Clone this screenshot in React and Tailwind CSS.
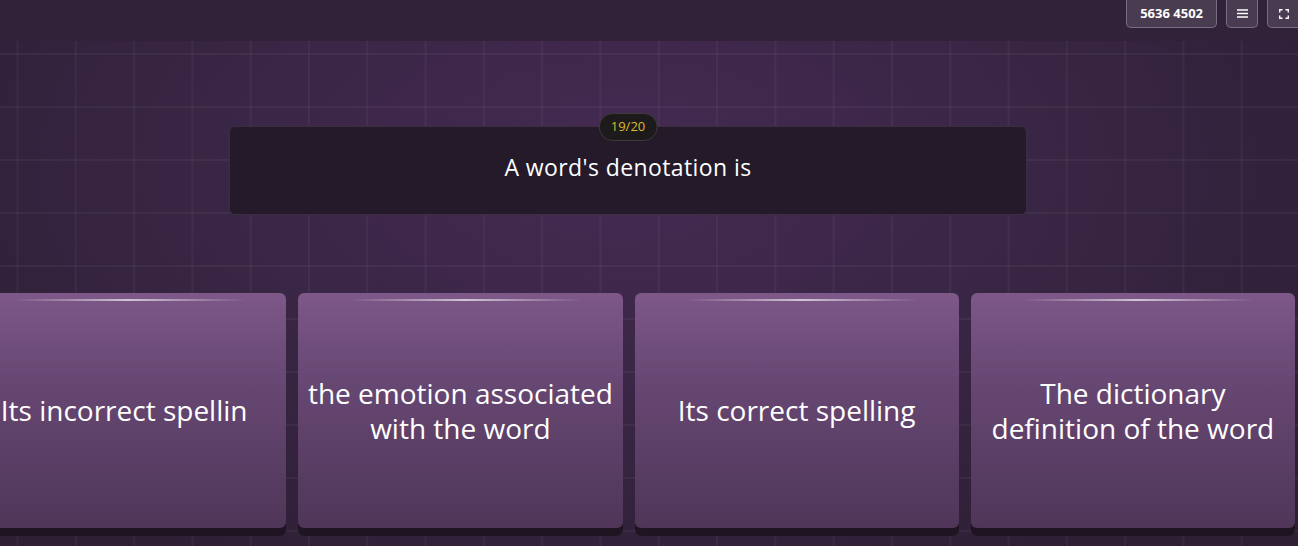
const options = [
  'Its incorrect spellin',
  'the emotion associated with the word',
  'Its correct spelling',
  'The dictionary definition of the word',
];

function TopBar() {
  return (
    <div className="h-[41px] bg-[#31223a] flex justify-end items-start gap-[9px]">
      <div className="h-[28px] px-[13px] flex items-center rounded-b-[5px] border border-t-0 border-[#7a6d80] bg-[#4a3c50] text-white text-[13px] font-bold">
        5636 4502
      </div>
      <div className="h-[28px] w-[32px] flex items-center justify-center rounded-b-[5px] border border-t-0 border-[#7a6d80] bg-[#4a3c50]">
        <svg width="11" height="9" viewBox="0 0 11 9" fill="none" stroke="white" strokeWidth="1.3">
          <path d="M0 1h11M0 4.5h11M0 8h11" />
        </svg>
      </div>
      <div className="h-[28px] w-[32px] -mr-[1px] flex items-center justify-center rounded-bl-[5px] border border-t-0 border-r-0 border-[#7a6d80] bg-[#4a3c50]">
        <svg width="10" height="10" viewBox="0 0 10 10" fill="none" stroke="white" strokeWidth="1.4">
          <path d="M0.7 3.5V0.7h2.8M6.5 0.7h2.8v2.8M9.3 6.5v2.8H6.5M3.5 9.3H0.7V6.5" />
        </svg>
      </div>
    </div>
  );
}

export default function App() {
  return (
    <div
      className="w-[1298px] h-[546px] overflow-hidden bg-[#2e2036] text-white"
      style={{ fontFamily: '"Open Sans", "Noto Sans", sans-serif' }}
    >
      <TopBar />
      <div className="relative h-[505px] bg-[radial-gradient(ellipse_at_48%_25%,#452a52_0%,#3a2646_40%,#2e1f35_85%)]">
        <div className="absolute inset-0 bg-[linear-gradient(to_right,rgba(255,255,255,0.04)_2px,transparent_2px),linear-gradient(to_bottom,rgba(255,255,255,0.04)_2px,transparent_2px)] bg-[size:58.3px_53px] bg-[position:16.5px_12px]" />
        <div className="relative flex flex-col">
          <div className="mt-[85px] ml-[229px] w-[798px] relative">
            <div className="absolute left-1/2 -translate-x-1/2 -top-[13px] h-[28px] px-[11px] flex items-center rounded-full bg-[#1d1a1b] border border-[#3d3a3c] text-[#dcba2c] text-[13px]">
              19/20
            </div>
            <div className="h-[89px] rounded-[6px] bg-[#241a29] border border-[#3a2e40] flex justify-center pt-[25px] text-[23px] tracking-[0.4px] leading-[30px]">
              A word's denotation is
            </div>
          </div>
          <div className="mt-[78px] ml-[-38px] w-[1333px] grid grid-cols-4 gap-3">
            {options.map((o, i) => (
              <div key={i} className="h-[243px] rounded-[7px] bg-[#1f1422] pb-[8px]">
                <div className="relative h-full rounded-[6px] bg-[linear-gradient(to_bottom,#7d5888,#684874_35%,#4f3658)] flex items-center justify-center px-1 text-center text-[28px] leading-[35px]">
                  <div className="absolute top-[6px] left-[50px] right-[40px] h-[2px] bg-[linear-gradient(to_right,transparent,rgba(255,255,255,0.65),transparent)]" />
                  {o}
                </div>
              </div>
            ))}
          </div>
        </div>
      </div>
    </div>
  );
}
